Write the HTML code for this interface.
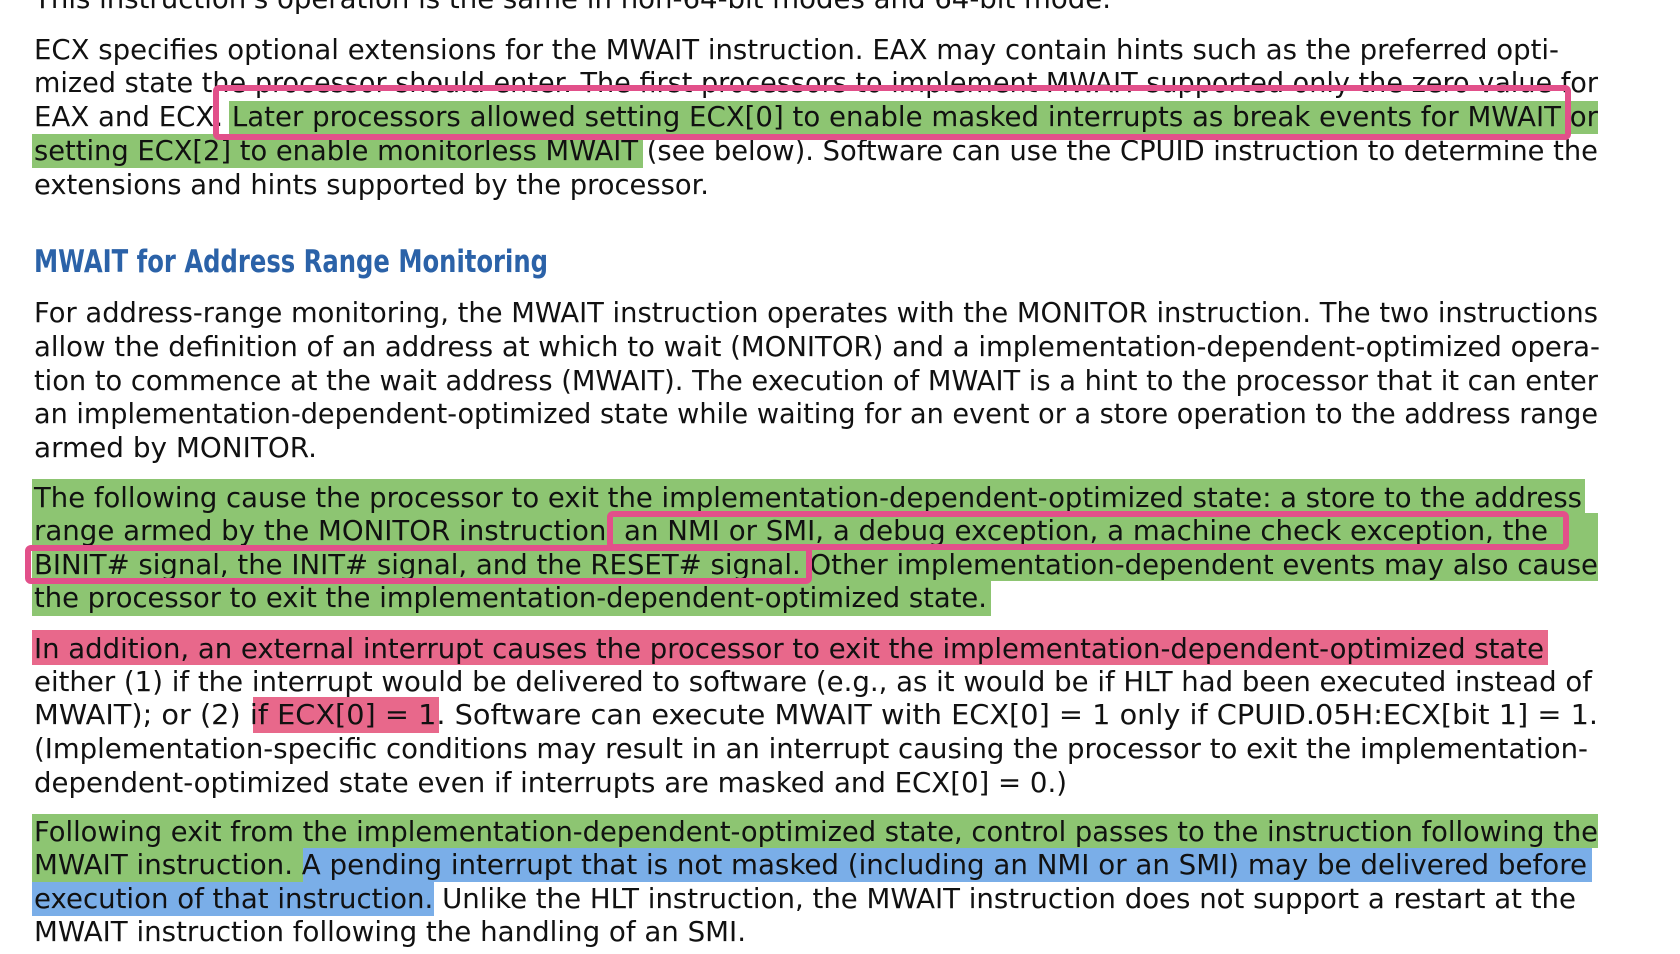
<!DOCTYPE html>
<html><head><meta charset="utf-8"><style>
html,body{margin:0;padding:0;background:#fff;width:1680px;height:954px;overflow:hidden}
svg{display:block}
text{font-family:"DejaVu Sans","Liberation Sans",sans-serif;font-size:28px;fill:#111}
.h{font-weight:bold;fill:#2b62a8;font-size:31px}
</style></head><body>
<svg width="1680" height="954" viewBox="0 0 1680 954">
<g fill="#8dc572">
<rect x="229" y="101" width="1369" height="33"/>
<rect x="32" y="134" width="611" height="34"/>
<rect x="32" y="479" width="1553" height="34"/>
<rect x="32" y="513" width="1566" height="68"/>
<rect x="32" y="581" width="959" height="35"/>
<rect x="32" y="814" width="1566" height="34"/>
<rect x="32" y="848" width="271" height="34"/>
</g>
<g fill="#e8688b">
<rect x="32" y="630" width="1516" height="35"/>
<rect x="253" y="697" width="186" height="36"/>
</g>
<g fill="#7aaee8">
<rect x="303" y="848" width="1289" height="34"/>
<rect x="32" y="882" width="402" height="34"/>
</g>
<g>
<text x="34" y="8" textLength="1077" lengthAdjust="spacingAndGlyphs">This instruction's operation is the same in non-64-bit modes and 64-bit mode.</text>
<text x="34" y="59" textLength="1525" lengthAdjust="spacingAndGlyphs">ECX specifies optional extensions for the MWAIT instruction. EAX may contain hints such as the preferred opti-</text>
<text x="34" y="92" textLength="1564" lengthAdjust="spacingAndGlyphs">mized state the processor should enter. The first processors to implement MWAIT supported only the zero value for</text>
<text x="34" y="126" textLength="1564" lengthAdjust="spacingAndGlyphs">EAX and ECX. Later processors allowed setting ECX[0] to enable masked interrupts as break events for MWAIT or</text>
<text x="34" y="160" textLength="1564" lengthAdjust="spacingAndGlyphs">setting ECX[2] to enable monitorless MWAIT (see below). Software can use the CPUID instruction to determine the</text>
<text x="34" y="194" textLength="675" lengthAdjust="spacingAndGlyphs">extensions and hints supported by the processor.</text>
<text class="h" x="34" y="272" textLength="514" lengthAdjust="spacingAndGlyphs">MWAIT for Address Range Monitoring</text>
<text x="34" y="322" textLength="1564" lengthAdjust="spacingAndGlyphs">For address-range monitoring, the MWAIT instruction operates with the MONITOR instruction. The two instructions</text>
<text x="34" y="356" textLength="1566" lengthAdjust="spacingAndGlyphs">allow the definition of an address at which to wait (MONITOR) and a implementation-dependent-optimized opera-</text>
<text x="34" y="390" textLength="1564" lengthAdjust="spacingAndGlyphs">tion to commence at the wait address (MWAIT). The execution of MWAIT is a hint to the processor that it can enter</text>
<text x="34" y="423" textLength="1564" lengthAdjust="spacingAndGlyphs">an implementation-dependent-optimized state while waiting for an event or a store operation to the address range</text>
<text x="34" y="457" textLength="283" lengthAdjust="spacingAndGlyphs">armed by MONITOR.</text>
<text x="34" y="507" textLength="1548" lengthAdjust="spacingAndGlyphs">The following cause the processor to exit the implementation-dependent-optimized state: a store to the address</text>
<text x="34" y="540" textLength="1514" lengthAdjust="spacingAndGlyphs">range armed by the MONITOR instruction, an NMI or SMI, a debug exception, a machine check exception, the</text>
<text x="34" y="574" textLength="1564" lengthAdjust="spacingAndGlyphs">BINIT# signal, the INIT# signal, and the RESET# signal. Other implementation-dependent events may also cause</text>
<text x="34" y="607" textLength="953" lengthAdjust="spacingAndGlyphs">the processor to exit the implementation-dependent-optimized state.</text>
<text x="34" y="658" textLength="1510" lengthAdjust="spacingAndGlyphs">In addition, an external interrupt causes the processor to exit the implementation-dependent-optimized state</text>
<text x="34" y="691" textLength="1558" lengthAdjust="spacingAndGlyphs">either (1) if the interrupt would be delivered to software (e.g., as it would be if HLT had been executed instead of</text>
<text x="34" y="724" textLength="1564" lengthAdjust="spacingAndGlyphs">MWAIT); or (2) if ECX[0] = 1. Software can execute MWAIT with ECX[0] = 1 only if CPUID.05H:ECX[bit 1] = 1.</text>
<text x="34" y="758" textLength="1554" lengthAdjust="spacingAndGlyphs">(Implementation-specific conditions may result in an interrupt causing the processor to exit the implementation-</text>
<text x="34" y="792" textLength="1033" lengthAdjust="spacingAndGlyphs">dependent-optimized state even if interrupts are masked and ECX[0] = 0.)</text>
<text x="34" y="841" textLength="1564" lengthAdjust="spacingAndGlyphs">Following exit from the implementation-dependent-optimized state, control passes to the instruction following the</text>
<text x="34" y="874" textLength="1553" lengthAdjust="spacingAndGlyphs">MWAIT instruction. A pending interrupt that is not masked (including an NMI or an SMI) may be delivered before</text>
<text x="34" y="908" textLength="1542" lengthAdjust="spacingAndGlyphs">execution of that instruction. Unlike the HLT instruction, the MWAIT instruction does not support a restart at the</text>
<text x="34" y="941" textLength="712" lengthAdjust="spacingAndGlyphs">MWAIT instruction following the handling of an SMI.</text>
</g>
<g fill="none" stroke="#e2508a" stroke-width="6">
<rect x="216" y="88" width="1352" height="49" rx="3"/>
<rect x="610" y="514" width="956" height="33" rx="3"/>
<rect x="28" y="548" width="781" height="33" rx="3"/>
</g>
</svg>
</body></html>
